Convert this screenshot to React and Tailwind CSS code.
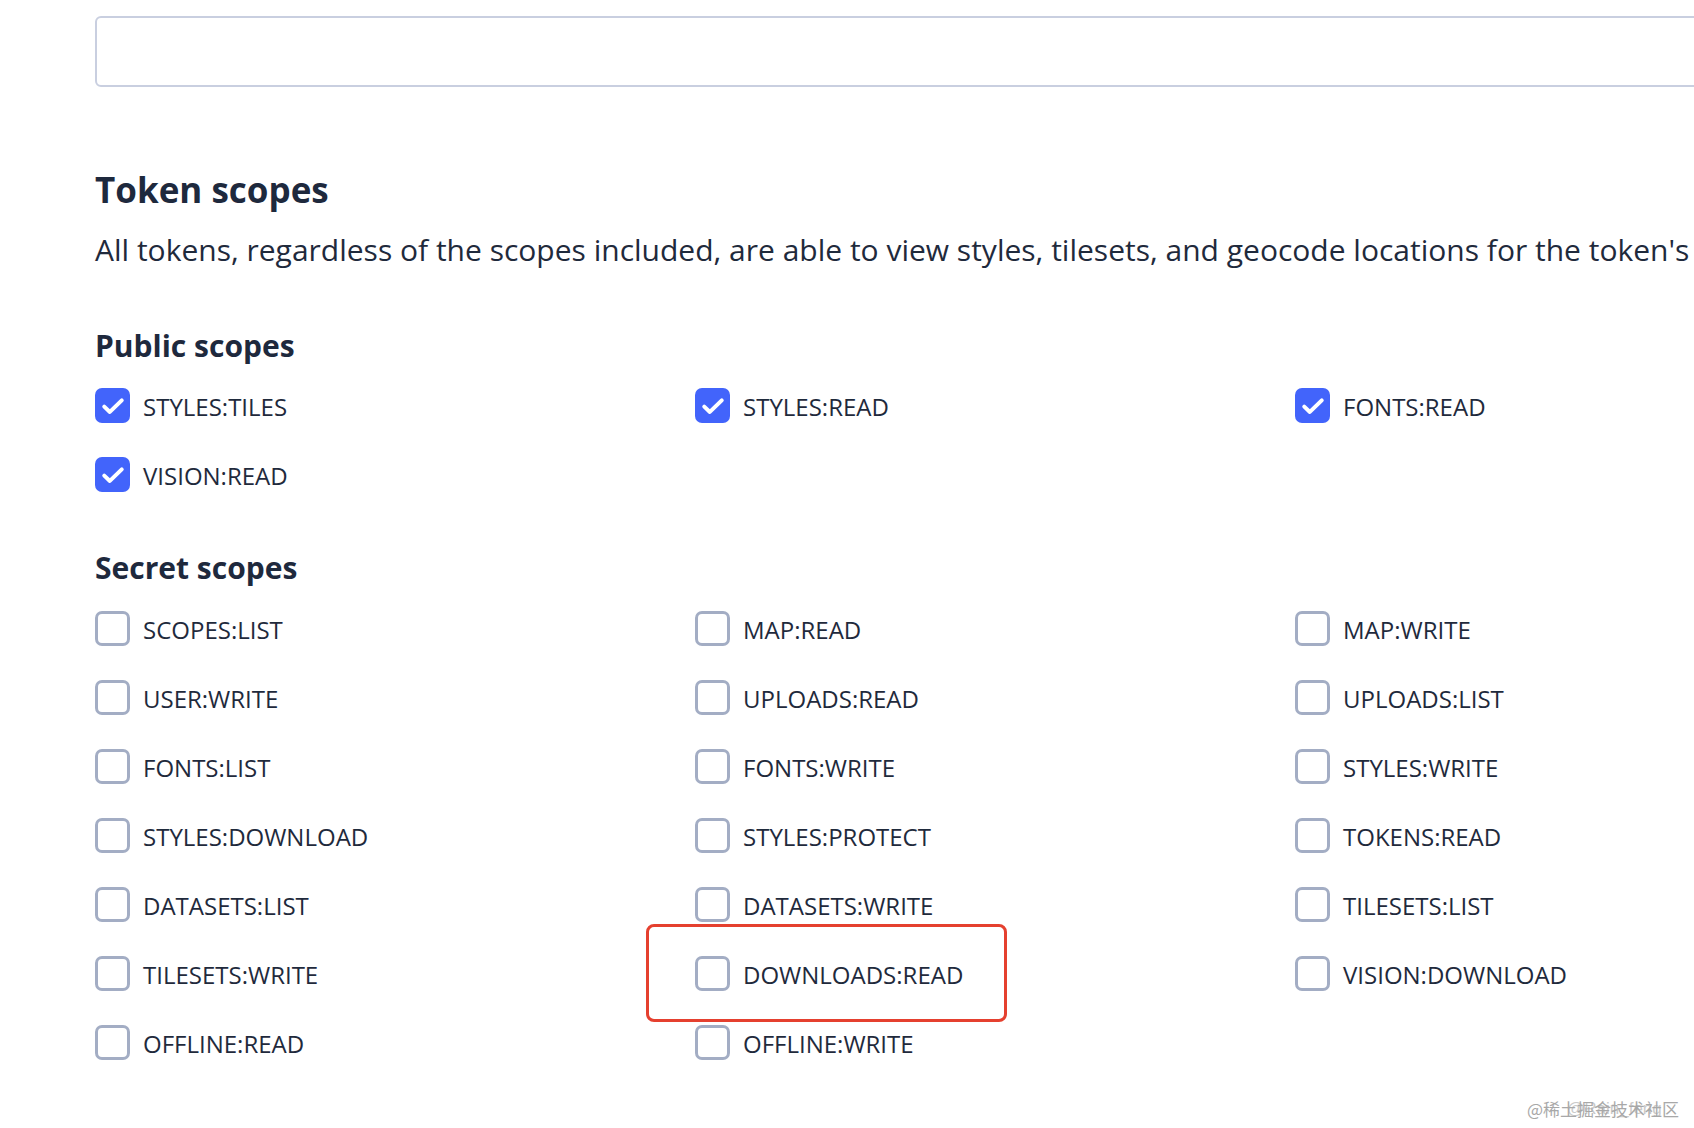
import React from "react";

const publicScopes = [
  { name: "STYLES:TILES", checked: true },
  { name: "STYLES:READ", checked: true },
  { name: "FONTS:READ", checked: true },
  { name: "VISION:READ", checked: true },
];

const secretScopes = [
  "SCOPES:LIST", "MAP:READ", "MAP:WRITE",
  "USER:WRITE", "UPLOADS:READ", "UPLOADS:LIST",
  "FONTS:LIST", "FONTS:WRITE", "STYLES:WRITE",
  "STYLES:DOWNLOAD", "STYLES:PROTECT", "TOKENS:READ",
  "DATASETS:LIST", "DATASETS:WRITE", "TILESETS:LIST",
  "TILESETS:WRITE", "DOWNLOADS:READ", "VISION:DOWNLOAD",
  "OFFLINE:READ", "OFFLINE:WRITE",
].map((name) => ({ name, checked: false }));

function Checkbox({ checked }) {
  if (checked) {
    return (
      <span className="w-[35px] h-[35px] rounded-[7px] bg-[#4264fb] flex items-center justify-center shrink-0">
        <svg width="28" height="28" viewBox="0 0 24 24" fill="none">
          <path d="M4.5 12.5l4.8 4.6L19.5 7.2" stroke="white" strokeWidth="3.4" strokeLinecap="round" strokeLinejoin="round" />
        </svg>
      </span>
    );
  }
  return <span className="w-[35px] h-[35px] rounded-[7px] border-[3px] border-[#a3adc4] bg-white shrink-0" />;
}

function ScopeGrid({ items }) {
  return (
    <div className="grid grid-cols-[600px_600px_600px]">
      {items.map((s) => (
        <label key={s.name} className="h-[69px] flex items-center gap-[13px]">
          <Checkbox checked={s.checked} />
          <span className="text-[24px] leading-none text-[#1f2a3c] pt-[3px]">{s.name}</span>
        </label>
      ))}
    </div>
  );
}

export default function App() {
  return (
    <div className="relative w-[1694px] h-[1128px] overflow-hidden bg-white pl-[95px] pt-[16px] font-['Open_Sans','Noto_Sans',sans-serif] text-[#1f2a3c]">
      {/* token name input */}
      <div className="w-[1700px] h-[71px] border-2 border-[#c9cfe0] rounded-[6px]" />

      <h2 className="mt-[85px] text-[35px] leading-none font-bold text-[#1e293d]">Token scopes</h2>
      <p className="mt-[28px] text-[30px] leading-none whitespace-nowrap">
        All tokens, regardless of the scopes included, are able to view styles, tilesets, and geocode locations for the token's owner account.
      </p>

      <h3 className="mt-[66px] text-[30px] leading-none font-bold text-[#1e293d]">Public scopes</h3>
      <div className="mt-[10px]">
        <ScopeGrid items={publicScopes} />
      </div>

      <h3 className="mt-[44px] text-[30px] leading-none font-bold text-[#1e293d]">Secret scopes</h3>
      <div className="mt-[11px]">
        <ScopeGrid items={secretScopes} />
      </div>

      {/* highlight annotation */}
      <div className="absolute left-[646px] top-[924px] w-[361px] h-[98px] border-[3px] border-[#e5402f] rounded-[8px] pointer-events-none" />

      {/* watermark */}
      <div className="absolute left-[1527px] top-[1100px] text-[17px] leading-none text-[#a8a8a8] font-['Noto_Sans_CJK_SC',sans-serif]">
        <span>@稀土掘金技术社区</span>
        <span className="absolute left-[40px] top-0 opacity-60 font-['Liberation_Sans',sans-serif]">@Rain_feng</span>
      </div>
    </div>
  );
}
